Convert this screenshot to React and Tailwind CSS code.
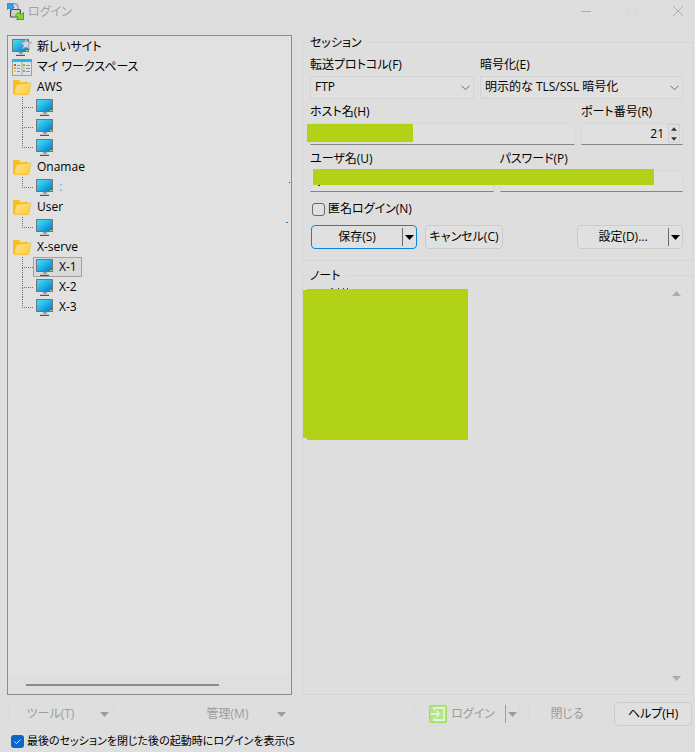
import React from "react";

function Monitor({ star = false }) {
  return (
    <svg className="block shrink-0" width={star ? 20 : 18} height="19" viewBox={star ? "0 0 20 19" : "0 0 18 19"} aria-hidden="true">
      <defs>
        <linearGradient id="screen" x1="0" y1="0" x2="1" y2="1">
          <stop offset="0" stopColor="#3fe0f2" />
          <stop offset="0.5" stopColor="#22b2e6" />
          <stop offset="1" stopColor="#0a72cc" />
        </linearGradient>
      </defs>
      <rect x="0" y="1" width="17" height="13" rx="0.6" fill="#70757c" />
      <rect x="1" y="2" width="15" height="11" fill="url(#screen)" />
      <rect x="14" y="12" width="2" height="1" fill="#a4f03c" />
      <rect x="7" y="14" width="4" height="2" fill="#9a9da2" />
      <rect x="4" y="16" width="9" height="1" fill="#c3c7cb" />
      <rect x="4" y="17" width="9" height="1" fill="#4e5257" />
      {star && (
        <path d="M14 0.500l1.500 3.500 4 .4-3 2.700.900 4-3.400-2.100-3.400 2.100.900-4-3-2.700 4-.4z" fill="#d3d8dc" stroke="#8e979f" strokeWidth="0.8" />
      )}
    </svg>
  );
}

function Folder() {
  return (
    <svg className="block shrink-0" width="20" height="18" viewBox="0 0 20 18" aria-hidden="true">
      <defs>
        <linearGradient id="folder" x1="0" y1="0" x2="1" y2="1">
          <stop offset="0" stopColor="#ffe59a" />
          <stop offset="1" stopColor="#ffc928" />
        </linearGradient>
      </defs>
      <path d="M1 2h6l1.500 2h7.500v12H2L1 15z" fill="#fbbf1c" />
      <path d="M4.500 6.500L19 5.200l-2.500 11.300H2z" fill="url(#folder)" stroke="#f4bb2c" strokeWidth="0.6" />
    </svg>
  );
}

function Workspace() {
  const marks = ["#f0461e", "#f2a51c", "#f2d81c"];
  const marks2 = ["#6fd022", "#e6d31e", "#b77cf0"];
  return (
    <svg className="block shrink-0" width="20" height="17" viewBox="0 0 20 17" aria-hidden="true">
      <rect width="20" height="17" fill="#9aa0a6" />
      <rect width="20" height="3" fill="#1fb9e2" />
      <rect x="1" y="3" width="8.5" height="13" fill="#dfe3e6" />
      <rect x="10.5" y="3" width="8.5" height="13" fill="#dfe3e6" />
      {marks.map((c, i) => (
        <g key={c}>
          <rect x="2" y={5 + i * 3} width="2" height="2" fill={c} />
          <rect x="5" y={6 + i * 3} width="3" height="1" fill="#8b9197" />
          <rect x="11" y={5 + i * 3} width="2" height="2" fill={marks2[i]} />
          <rect x="14" y={6 + i * 3} width="4" height="1" fill="#8b9197" />
        </g>
      ))}
    </svg>
  );
}

function AppLogo() {
  return (
    <svg className="block shrink-0" width="17" height="17" viewBox="0 0 17 17" aria-hidden="true">
      <path d="M5 7V4a3 3 0 0 1 6 0V7" fill="none" stroke="#adadad" strokeWidth="1.800" />
      <rect x="3.500" y="6.500" width="10" height="7.500" rx="1" fill="#cfcfcf" stroke="#4d4d4d" strokeWidth="1.200" />
      <path d="M0.400 0.400H6.500L5 2l2.300 2.300L4.300 7.300 2 5 .4 6.500z" fill="#2aa5ea" stroke="#1466b0" strokeWidth="0.600" />
      <path d="M16.500 9.500V16.500H9.500L11.200 14.800 8.500 12.100 11.500 9.100 14.300 11.700z" fill="#7be02a" stroke="#3f8a14" strokeWidth="0.800" />
    </svg>
  );
}

function Chevron() {
  return (
    <svg className="pointer-events-none absolute right-1 top-2" width="9" height="6" viewBox="0 0 9 6" fill="none" stroke="#6a6a6a" aria-hidden="true">
      <path d="M0.500 0.700L4.500 4.700L8.500 0.700" />
    </svg>
  );
}

function Triangle({ up = false, className = "" }) {
  return (
    <svg className={className} width="9" height="5" viewBox="0 0 9 5" fill="currentColor" aria-hidden="true">
      <path d={up ? "M0 5h9L4.500 0z" : "M0 0h9L4.500 5z"} />
    </svg>
  );
}

function RootRow({ icon, label }) {
  return (
    <li className="flex h-5 items-center gap-[5px] pl-1">
      <span className="flex w-5 justify-center">{icon}</span>
      <span>{label}</span>
    </li>
  );
}

function SiteRow({ label = "", selected = false, last = false, faint = false }) {
  return (
    <li className="flex h-5 items-center pl-[14px]">
      <span className="flex h-5 w-[11px] shrink-0 flex-col" aria-hidden="true">
        <span className="h-[11px] border-b border-l border-dotted border-[#707070]" />
        {!last && <span className="h-[9px] border-l border-dotted border-[#707070]" />}
      </span>
      <span
        className={
          selected
            ? "flex h-5 items-center gap-[5px] border border-[#a0a0a0] bg-[#d9d9d9] pl-[2px] pr-1"
            : "flex h-5 items-center gap-[5px] border border-transparent pl-[2px] pr-1"
        }
      >
        <Monitor />
        <span className={faint ? "text-[#3fb4f5]" : ""}>{label}</span>
      </span>
    </li>
  );
}

function Group({ title, className = "", children }) {
  return (
    <fieldset className={"min-w-0 border border-[#d5d5d5] pl-[7px] pr-[9px] " + className}>
      <legend className="h-[15px] pr-1 leading-[15px]">{title}</legend>
      {children}
    </fieldset>
  );
}

const box = "block h-[23px] w-full rounded-[2px] border border-[#d3d3d3] bg-[#e0e0e0] px-1 pb-[2px] outline-none";
const line = "block h-[22px] w-full border border-[#d9d9d9] border-b-[#858585] bg-[#e0e0e0] px-1 outline-none";
const button = "h-6 rounded-[4px] border border-[#cccccc] bg-[#e0e0e0] text-center";
const ghost = "flex h-6 items-center rounded-[4px] border border-[#dadada] text-[#9c9c9c]";

export default function App() {
  return (
    <div className="flex min-h-screen flex-col bg-[#dedede] font-['Open_Sans','Noto_Sans_CJK_JP',sans-serif] text-[12px] leading-[16px] text-black [font-feature-settings:'palt']">
      <header className="flex h-[35px] items-start justify-between pl-[7px] pr-3 pt-[3px]">
        <div className="flex items-center gap-1">
          <AppLogo />
          <h1 className="text-[#a3a3a3]">ログイン</h1>
        </div>
        <div className="flex gap-9 pt-[3px] text-[#ababab]">
          <button type="button" aria-label="最小化">
            <svg width="10" height="10" viewBox="0 0 10 10" stroke="currentColor"><path d="M0 5.500h10" /></svg>
          </button>
          <button type="button" aria-label="最大化" className="text-[#d7d7d7]">
            <svg width="10" height="10" viewBox="0 0 10 10" fill="none" stroke="currentColor"><rect x="0.500" y="0.500" width="9" height="9" rx="1" /></svg>
          </button>
          <button type="button" aria-label="閉じる">
            <svg width="10" height="10" viewBox="0 0 10 10" stroke="currentColor"><path d="M0 0l10 10M10 0L0 10" /></svg>
          </button>
        </div>
      </header>

      <main className="flex grow gap-[10px] pl-[7px] pr-[2px]">
        <nav className="relative flex w-[285px] shrink-0 flex-col justify-between border border-[#8b8b97] bg-[#e1e1e1] pt-px">
          <ul>
            <RootRow icon={<Monitor star />} label="新しいサイト" />
            <RootRow icon={<Workspace />} label="マイ ワークスペース" />
            <RootRow icon={<Folder />} label="AWS" />
            <SiteRow />
            <SiteRow />
            <SiteRow last />
            <RootRow icon={<Folder />} label="Onamae" />
            <SiteRow label=":" faint last />
            <RootRow icon={<Folder />} label="User" />
            <SiteRow last />
            <RootRow icon={<Folder />} label="X-serve" />
            <SiteRow label="X-1" selected />
            <SiteRow label="X-2" />
            <SiteRow label="X-3" last />
          </ul>
          <div className="flex h-[18px] items-center bg-[#dfdfdf] pl-[18px]">
            <div className="h-[2px] w-[193px] bg-[#8b8b8b]" />
          </div>
          <span className="absolute right-[1px] top-[146px] h-px w-px bg-[#302020]" />
          <span className="absolute right-[3px] top-[186px] h-px w-[2px] bg-[#2a7ac0]" />
        </nav>

        <div className="flex min-w-0 grow flex-col gap-[7px]">
          <Group title="セッション" className="pb-[11px]">
            <div className="flex gap-[6px] pt-[7px]">
              <div className="w-[164px]">
                <label htmlFor="protocol" className="block">転送プロトコル(F)</label>
                <div className="relative pt-[3px]">
                  <select id="protocol" className={box + " appearance-none"}><option>FTP</option></select>
                  <span className="absolute right-0 top-1"><Chevron /></span>
                </div>
              </div>
              <div className="min-w-0 grow">
                <label htmlFor="crypt" className="block">暗号化(E)</label>
                <div className="relative pt-[3px]">
                  <select id="crypt" className={box + " appearance-none"}><option>明示的な TLS/SSL 暗号化</option></select>
                  <span className="absolute right-0 top-1"><Chevron /></span>
                </div>
              </div>
            </div>

            <div className="flex gap-[6px] pt-[5px]">
              <div className="relative min-w-0 grow">
                <label htmlFor="host" className="block pb-[3px]">ホスト名(H)</label>
                <input id="host" className={line} />
                <span className="absolute -left-[3px] top-5 h-[18px] w-[106px] bg-[#b1d217]" />
              </div>
              <div className="w-[102px]">
                <label htmlFor="port" className="block pb-[3px]">ポート番号(R)</label>
                <div className="relative">
                  <input id="port" defaultValue="21" className={line + " pb-[2px] pr-[18px] text-right"} />
                  <div className="absolute right-[3px] top-[1px] flex flex-col gap-px text-[#303030]">
                    <button type="button" aria-label="増やす" className="flex h-[9px] w-3 items-center justify-center border border-[#d0d0d0]">
                      <Triangle up className="h-[4px] w-[6px]" />
                    </button>
                    <button type="button" aria-label="減らす" className="flex h-[9px] w-3 items-center justify-center border border-[#d0d0d0]">
                      <Triangle className="h-[4px] w-[6px]" />
                    </button>
                  </div>
                </div>
              </div>
            </div>

            <div className="relative flex gap-[6px] pt-[6px]">
              <div className="min-w-0 flex-1">
                <label htmlFor="user" className="block pb-[3px]">ユーザ名(U)</label>
                <input id="user" className={line} />
              </div>
              <div className="min-w-0 flex-1">
                <label htmlFor="pass" className="block pb-[3px]">パスワード(P)</label>
                <input id="pass" type="password" className={line} />
              </div>
              <span className="absolute left-[3px] right-[29px] top-6 h-4 bg-[#b1d217]" />
              <span className="absolute left-2 top-10 h-px w-[2px] bg-[#203060]" />
            </div>

            <label className="flex items-center gap-[3px] pl-[2px] pt-[9px]">
              <input type="checkbox" className="h-[13px] w-[13px] appearance-none rounded-[3px] border border-[#6b6b6b] bg-[#e0e0e0]" />
              匿名ログイン(N)
            </label>

            <div className="flex gap-2 pt-2 pl-px">
              <div className="flex h-6 w-[106px] items-center rounded-[4px] border border-[#0a84dc] bg-[#e0e0e0]">
                <button type="button" className="grow">保存(S)</button>
                <button type="button" aria-label="保存メニュー" className="flex h-[18px] items-center border-l border-[#6b6b6b] pl-[2px] pr-[2px]"><Triangle /></button>
              </div>
              <button type="button" className={button + " w-[78px]"}>キャンセル(C)</button>
              <div className="ml-auto flex h-6 w-[106px] items-center rounded-[4px] border border-[#cccccc] bg-[#e0e0e0]">
                <button type="button" className="grow">設定(D)...</button>
                <button type="button" aria-label="設定メニュー" className="flex h-[18px] items-center border-l border-[#6b6b6b] pl-[2px] pr-[2px]"><Triangle /></button>
              </div>
            </div>
          </Group>

          <Group title={<label htmlFor="note">ノート</label>} className="relative flex grow flex-col">
            <div className="flex h-full grow pt-[3px]">
              <textarea id="note" className="grow resize-none bg-transparent outline-none" />
              <div className="flex w-[15px] flex-col items-center justify-between border-l border-[#e1e1e1] pb-[13px] pt-[5px] text-[#acacac]">
                <Triangle up />
                <Triangle />
              </div>
            </div>
            <div className="absolute left-0 top-[6px] h-[151px] w-[165px]">
              <span className="absolute -top-px left-7 h-px w-[2px] bg-[#606060]" />
              <span className="absolute -top-px left-[35px] h-px w-px bg-[#303040]" />
              <span className="absolute -top-px left-10 h-px w-px bg-[#303040]" />
              <span className="absolute -top-px left-11 h-px w-px bg-[#303040]" />
              <div className="absolute left-0 top-px h-[148px] w-1 bg-[#b1d217]" />
              <div className="absolute left-1 top-0 h-[151px] w-[161px] bg-[#b1d217]" />
            </div>
          </Group>
        </div>
      </main>

      <footer className="pl-2 pr-[3px] pt-[7px]">
        <div className="flex">
          <button type="button" disabled className={ghost + " w-[106px]"}>
            <span className="grow pr-2">ツール(T)</span><Triangle className="mr-1" />
          </button>
          <button type="button" disabled className={ghost + " ml-[71px] w-[106px]"}>
            <span className="grow pr-2">管理(M)</span><Triangle className="mr-1" />
          </button>
          <div className="ml-auto flex gap-2">
            <div className={ghost + " w-[106px]"}>
              <button type="button" disabled className="flex grow items-center justify-center gap-1 pl-1">
                <svg width="18" height="18" viewBox="0 0 18 18" fill="none" stroke="#e6eee0" strokeWidth="1.800" aria-hidden="true">
                  <rect x="0.500" y="0.500" width="17" height="17" rx="1" fill="#aee77e" stroke="#9cdc68" strokeWidth="1" />
                  <path d="M5 5.500V3h10v12H5v-2.500M2 9h8M7.500 6l3 3-3 3" />
                </svg>
                ログイン
              </button>
              <button type="button" disabled aria-label="ログインメニュー" className="flex h-[18px] items-center border-l border-[#9c9c9c] pl-[2px] pr-[2px]"><Triangle /></button>
            </div>
            <button type="button" disabled className="h-6 w-[78px] rounded-[4px] border border-[#dadada] text-[#9c9c9c]">閉じる</button>
            <button type="button" className={button + " w-[78px]"}>ヘルプ(H)</button>
          </div>
        </div>
        <label className="flex h-[26px] items-center gap-[3px] whitespace-nowrap pl-[3px] pt-[4px]">
          <span className="relative h-[13px] w-[13px] shrink-0">
            <input type="checkbox" defaultChecked className="block h-[13px] w-[13px] appearance-none rounded-[3px] bg-[#0a66c8]" />
            <svg className="pointer-events-none absolute left-[3px] top-[4px]" width="7" height="6" viewBox="0 0 7 6" fill="none" stroke="#e8f0fa" aria-hidden="true"><path d="M0.500 2.500l2 2 4-4" /></svg>
          </span>
          <span className="text-[11px]">最後のセッションを閉じた後の起動時にログインを表示(S</span>
        </label>
      </footer>
    </div>
  );
}
